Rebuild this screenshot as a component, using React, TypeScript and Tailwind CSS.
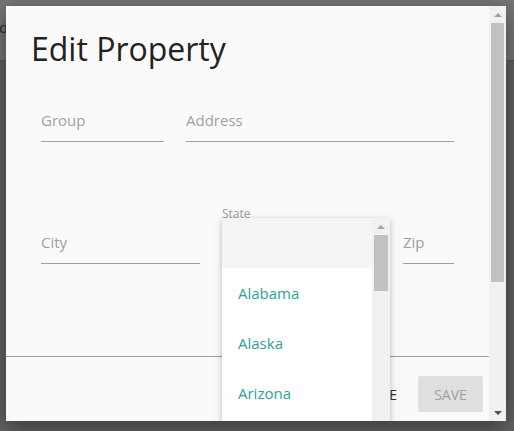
export default function App() {
  const label = "h-[20px] text-[15px] leading-[20px] text-[#a0a0a0]";
  const field = "border-b border-[#9e9e9e] pb-[11px]";
  const states = ["Alabama", "Alaska", "Arizona"];

  return (
    <div className="relative h-[431px] w-[514px] overflow-hidden bg-[#636363] font-['Open_Sans',sans-serif]">
      {/* page under the overlay */}
      <div className="h-[61px] border-b border-[#595959] bg-[#777777] pt-[17px] text-[15px] leading-[20px] text-[#2a2a2a]">
        <span className="-ml-[1px]">d</span>
      </div>

      {/* modal */}
      <div className="absolute left-[6px] top-[6px] flex h-[415px] w-[500px] bg-[#fafafa] shadow-[0_6px_24px_rgba(0,0,0,0.45)]">
        <div className="relative flex-1 overflow-hidden">
          <h1 className="pl-[25px] pt-[23px] text-[32px] font-normal leading-[40px] text-[#222222]">
            Edit Property
          </h1>

          <div className="mt-[41px] flex gap-[22px] pl-[35px]">
            <div className={`w-[123px] ${field}`}>
              <div className={label}>Group</div>
            </div>
            <div className={`w-[268px] ${field}`}>
              <div className={label}>Address</div>
            </div>
          </div>

          <div className="mt-[90px] flex pl-[35px]">
            <div className={`w-[159px] ${field}`}>
              <div className={label}>City</div>
            </div>
            <div className={`relative ml-[22px] w-[168px] ${field}`}>
              <div className="absolute -top-[25px] left-0 text-[12px] leading-[14px] text-[#9e9e9e]">
                State
              </div>
              <div className={label}></div>
              {/* open dropdown */}
              <div className="absolute -top-[14px] left-0 z-10 flex h-[210px] w-[168px] overflow-hidden bg-white shadow-[0_2px_5px_rgba(0,0,0,0.16),0_2px_10px_rgba(0,0,0,0.12)]">
                <div className="flex-1">
                  <div className="h-[50px] bg-[#f5f5f5]"></div>
                  {states.map((s) => (
                    <div
                      key={s}
                      className="flex h-[50px] items-center pl-[16px] text-[15px] text-[#26a69a]"
                    >
                      {s}
                    </div>
                  ))}
                </div>
                <div className="flex w-[18px] flex-col bg-[#f1f1f1]">
                  <div className="flex h-[17px] items-center justify-center">
                    <div className="h-0 w-0 border-x-[4px] border-b-[4px] border-x-transparent border-b-[#a3a3a3]"></div>
                  </div>
                  <div className="mx-[2px] h-[56px] bg-[#c1c1c1]"></div>
                </div>
              </div>
            </div>
            <div className={`ml-[13px] w-[51px] ${field}`}>
              <div className={label}>Zip</div>
            </div>
          </div>

          <div className="mt-[92px] flex justify-end border-t border-[#9e9e9e] pr-[6px] pt-[19px]">
            <button className="mr-[5px] h-[36px] px-[16px] text-[14px] uppercase text-[#343434]">
              Close
            </button>
            <button className="h-[36px] w-[65px] rounded-[2px] bg-[#dfdfdf] text-[14px] uppercase text-[#9f9f9f]">
              Save
            </button>
          </div>
        </div>

        {/* modal scrollbar */}
        <div className="flex w-[17px] flex-col bg-[#f1f1f1]">
          <div className="flex h-[17px] items-center justify-center">
            <div className="h-0 w-0 border-x-[4px] border-b-[4px] border-x-transparent border-b-[#a3a3a3]"></div>
          </div>
          <div className="mx-[2px] h-[259px] bg-[#c1c1c1]"></div>
          <div className="flex-1"></div>
          <div className="flex h-[17px] items-center justify-center">
            <div className="h-0 w-0 border-x-[4px] border-t-[4px] border-x-transparent border-t-[#505050]"></div>
          </div>
        </div>
      </div>
    </div>
  );
}
